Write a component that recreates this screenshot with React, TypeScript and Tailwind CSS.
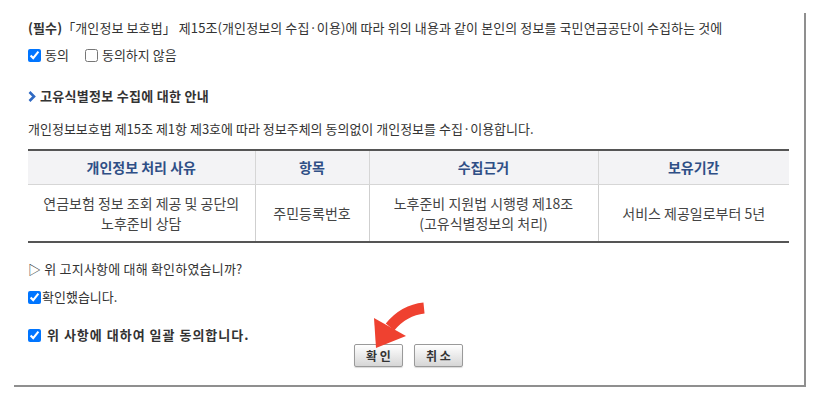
import React from "react";

function Arrow() {
  return (
    <svg
      className="absolute left-[360px] top-[285px]"
      width="75"
      height="60"
      viewBox="0 0 75 60"
    >
      <path d="M64 10 Q44 12 30 29" stroke="#ef4130" strokeWidth="11" fill="none" strokeLinecap="butt" />
      <polygon points="14,20 16,50 46,38" fill="#ef4130" />
    </svg>
  );
}

function Btn({ label }: { label: string }) {
  return (
    <button className="h-[23px] w-[49px] rounded-[2px] border border-[#9a9a9a] bg-gradient-to-b from-[#ffffff] to-[#d6d6d6] text-[12px] font-bold text-[#333] shadow-[0_1px_1px_rgba(0,0,0,0.15)]">
      {label}
    </button>
  );
}

export default function App() {
  const headers = ["개인정보 처리 사유", "항목", "수집근거", "보유기간"];
  return (
    <div className="relative h-[399px] w-[817px] bg-white font-['Noto_Sans_CJK_KR',sans-serif] text-[#333]">
      <div className="ml-[14px] mt-[13px] h-[374px] w-[792px] border-b-2 border-r-2 border-[#8f8f8f] pl-[14px] pt-[6px]">
        <div className="flex h-[18px] items-center text-[13px] tracking-[0.1px]">
          <span className="font-bold">(필수)</span>
          <span>「개인정보 보호법」 제15조(개인정보의 수집·이용)에 따라 위의 내용과 같이 본인의 정보를 국민연금공단이 수집하는 것에</span>
        </div>
        <div className="mt-[9px] flex h-[18px] items-center text-[13px]">
          <input type="checkbox" defaultChecked className="m-0 h-[13px] w-[13px]" />
          <span className="ml-[4px]">동의</span>
          <input type="checkbox" className="m-0 ml-[16px] h-[13px] w-[13px]" />
          <span className="ml-[4px]">동의하지 않음</span>
        </div>
        <div className="mt-[23px] flex h-[18px] items-center">
          <svg width="8" height="11" viewBox="0 0 8 11">
            <path d="M1.5 1 L6 5.5 L1.5 10" stroke="#2f69c3" strokeWidth="2.6" fill="none" />
          </svg>
          <span className="ml-[4px] text-[13px] font-bold tracking-[0.3px] text-[#333]">고유식별정보 수집에 대한 안내</span>
        </div>
        <div className="mt-[15px] flex h-[18px] items-center text-[13px]">
          개인정보보호법 제15조 제1항 제3호에 따라 정보주체의 동의없이 개인정보를 수집·이용합니다.
        </div>
        <table className="mt-[11px] w-[761px] table-fixed border-collapse border-y-2 border-[#555]">
          <colgroup>
            <col className="w-[227px]" />
            <col className="w-[114px]" />
            <col className="w-[229px]" />
            <col className="w-[191px]" />
          </colgroup>
          <thead>
            <tr className="h-[34px] bg-[#f3f3f5]">
              {headers.map((h, i) => (
                <th
                  key={h}
                  className={`border-b border-[#d6d6d6] text-[14px] font-bold text-[#2f4f86] ${i > 0 ? "border-l" : ""}`}
                >
                  {h}
                </th>
              ))}
            </tr>
          </thead>
          <tbody>
            <tr className="h-[58px] text-center text-[14px] leading-[20px] text-[#444]">
              <td>
                연금보험 정보 조회 제공 및 공단의
                <br />
                노후준비 상담
              </td>
              <td className="border-l border-[#cfcfcf]">주민등록번호</td>
              <td className="border-l border-[#cfcfcf]">
                노후준비 지원법 시행령 제18조
                <br />
                (고유식별정보의 처리)
              </td>
              <td className="border-l border-[#cfcfcf]">서비스 제공일로부터 5년</td>
            </tr>
          </tbody>
        </table>
        <div className="mt-[17px] flex h-[18px] items-center text-[13px] tracking-[0.2px]">▷ 위 고지사항에 대해 확인하였습니까?</div>
        <div className="mt-[10px] flex h-[18px] items-center text-[13px]">
          <input type="checkbox" defaultChecked className="m-0 h-[13px] w-[13px]" />
          <span className="ml-[1px]">확인했습니다.</span>
        </div>
        <div className="mt-[20px] flex h-[18px] items-center">
          <input type="checkbox" defaultChecked className="m-0 h-[13px] w-[13px]" />
          <span className="ml-[6px] text-[13px] font-bold tracking-[1px]">위 사항에 대하여 일괄 동의합니다.</span>
        </div>
        <div className="flex w-[761px] justify-center gap-[11px]">
          <Btn label="확 인" />
          <Btn label="취 소" />
        </div>
      </div>
      <Arrow />
    </div>
  );
}
